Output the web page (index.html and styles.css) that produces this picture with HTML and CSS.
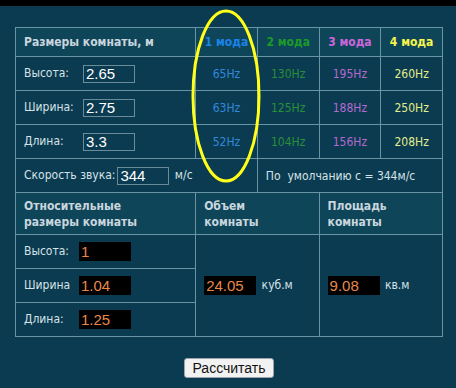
FILE: index.html
```html
<!DOCTYPE html>
<html lang="ru">
  <head>
    <meta charset="UTF-8" />
    <title>Комнатные моды</title>
    <link rel="stylesheet" href="styles.css">
  </head>
  <body>
    <div class="topbar"></div>
    <div class="page">
      <table class="calc">
        <tr class="head">
          <th class="first">Размеры комнаты, м</th>
          <th class="m1">1 мода</th>
          <th class="m2">2 мода</th>
          <th class="m3">3 мода</th>
          <th class="m4">4 мода</th>
        </tr>
        <tr class="row">
          <td class="first"><span class="lbl">Высота:</span><input class="dim" type="text" value="2.65" /></td>
          <td class="val m1">65Hz</td>
          <td class="val m2">130Hz</td>
          <td class="val m3">195Hz</td>
          <td class="val m4">260Hz</td>
        </tr>
        <tr class="row">
          <td class="first"><span class="lbl">Ширина:</span><input class="dim" type="text" value="2.75" /></td>
          <td class="val m1">63Hz</td>
          <td class="val m2">125Hz</td>
          <td class="val m3">188Hz</td>
          <td class="val m4">250Hz</td>
        </tr>
        <tr class="row">
          <td class="first"><span class="lbl">Длина:</span><input class="dim" type="text" value="3.3" /></td>
          <td class="val m1">52Hz</td>
          <td class="val m2">104Hz</td>
          <td class="val m3">156Hz</td>
          <td class="val m4">208Hz</td>
        </tr>
        <tr class="row">
          <td class="first" colspan="2"><span class="speed-lbl">Скорость звука:</span><input class="dim" type="text" value="344" /> <span class="unit">м/с</span></td>
          <td class="note" colspan="3">По&nbsp; умолчанию c = 344м/с</td>
        </tr>
        <tr class="head head2">
          <th class="first">Относительные<br />размеры комнаты</th>
          <th colspan="2">Объем<br />комнаты</th>
          <th colspan="2">Площадь<br />комнаты</th>
        </tr>
        <tr class="row">
          <td class="first"><span class="lbl small">Высота:</span><input class="out" type="text" value="1" /></td>
          <td colspan="2" rowspan="3"><input class="out" type="text" value="24.05" /> <span class="unit">куб.м</span></td>
          <td colspan="2" rowspan="3"><input class="out" type="text" value="9.08" /> <span class="unit">кв.м</span></td>
        </tr>
        <tr class="row">
          <td class="first"><span class="lbl small">Ширина</span><input class="out" type="text" value="1.04" /></td>
        </tr>
        <tr class="row">
          <td class="first"><span class="lbl small">Длина:</span><input class="out" type="text" value="1.25" /></td>
        </tr>
      </table>
      <div class="actions">
        <button type="button" class="calc-btn">Рассчитать</button>
      </div>
    </div>

    <!-- пометка поверх таблицы -->
    <svg class="mark" width="456" height="388" viewBox="0 0 456 388">
      <ellipse cx="226" cy="96" rx="33" ry="85" fill="none" stroke="#ffff1a" stroke-width="3" />
    </svg>
  </body>
</html>
```

FILE: styles.css
```css
body {
  margin: 0;
  height: 388px;
  background-color: #0b3b50;
  font-family: "DejaVu Sans Condensed", Tahoma, "DejaVu Sans", sans-serif;
  font-size: 12px;
  color: #d6e2e8;
  overflow: hidden;
}
.topbar {
  height: 6px;
  background-color: #000;
}
.page {
  padding: 21px 0 0 15px;
  width: 428px;
}
.calc {
  width: 428px;
  border-collapse: collapse;
}
.calc th,
.calc td {
  border: 1px solid #6a93a4;
  padding: 0 0 0 8px;
  text-align: left;
  font-weight: normal;
}
.head th {
  height: 28px;
  background-color: #0f4559;
  font-weight: bold;
  color: #c9d6de;
}
.head .m1,
.head .m2,
.head .m3,
.head .m4 {
  text-align: center;
  padding: 0;
  width: 61px;
}
.head2 th {
  height: 41px;
  line-height: 16px;
}
.row td {
  height: 33px;
}
.calc .first {
  width: 172px;
}
.calc .val {
  padding: 0;
  text-align: center;
}
.m1 { color: #3288dc; }
.m2 { color: #2a8f3a; }
.m3 { color: #b46ad0; }
.m4 { color: #e2ee8c; }
.head .m1 { color: #1a84e8; }
.head .m2 { color: #1b9a2a; }
.head .m3 { color: #cc66dd; }
.head .m4 { color: #f6f64e; }
.lbl {
  display: inline-block;
  width: 59px;
}
.lbl.small {
  width: 55px;
}
.speed-lbl {
  margin-right: 2px;
}
.dim {
  width: 46px;
  height: 16px;
  padding: 0 2px;
  border: 1px solid #6a8c99;
  background-color: #0b3b50;
  color: #fff;
  font-family: "Liberation Sans", Arial, sans-serif;
  font-size: 15px;
  vertical-align: middle;
}
.unit {
  margin-left: 2px;
}
.out {
  width: 48px;
  height: 19px;
  padding: 0 2px;
  border: none;
  background-color: #000;
  color: #e8894a;
  font-family: "Liberation Sans", Arial, sans-serif;
  font-size: 15px;
  vertical-align: middle;
}
.actions {
  margin-top: 21px;
  text-align: center;
}
.calc-btn {
  padding: 1px 7px;
  height: 20px;
  border: 1px solid #9aa4aa;
  border-radius: 3px;
  background-color: #f2f2f2;
  color: #111;
  font-family: "Liberation Sans", Arial, sans-serif;
  font-size: 14px;
}
.mark {
  position: absolute;
  left: 0;
  top: 0;
  pointer-events: none;
}
```
